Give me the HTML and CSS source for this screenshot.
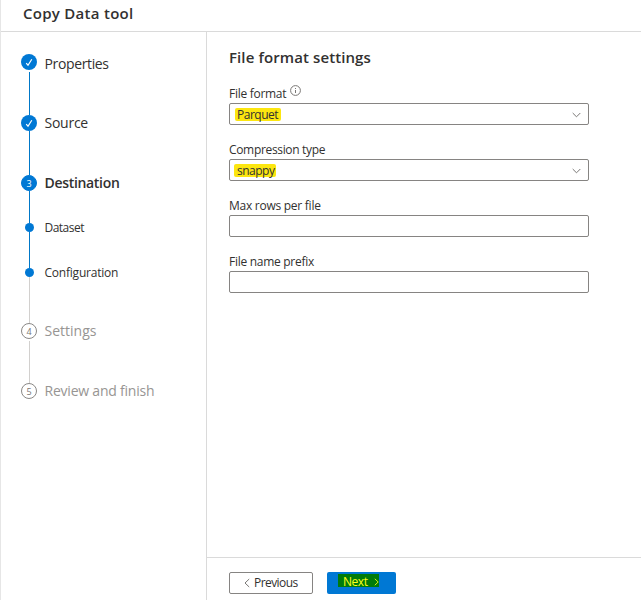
FILE: index.html
```html
<!DOCTYPE html>
<html lang="en">
<head>
<meta charset="utf-8">
<title>Copy Data tool</title>
<link rel="stylesheet" href="styles.css">
</head>
<body>
<div class="app">
  <header class="header"><h1><span class="t-title">Copy Data tool</span></h1></header>
  <div class="body">
    <nav class="steps">
      <div class="step s1"><div class="rail"><span class="dot done"><svg width="16" height="16" viewBox="0 0 16 16"><path d="M5.2 9.2 7 11.2 10.8 5.2"/></svg></span><i class="line gap"></i></div><span class="label t-properties">Properties</span></div>
      <div class="step s2"><div class="rail"><span class="dot done"><svg width="16" height="16" viewBox="0 0 16 16"><path d="M5.2 9.2 7 11.2 10.8 5.2"/></svg></span><i class="line"></i></div><span class="label t-source">Source</span></div>
      <div class="step s3"><div class="rail"><span class="dot current">3</span><i class="line"></i></div><span class="label strong t-destination">Destination</span></div>
      <div class="step sub s4"><div class="rail"><span class="small-dot"></span><i class="line"></i></div><span class="label t-dataset">Dataset</span></div>
      <div class="step sub s5"><div class="rail"><span class="small-dot"></span><i class="line pending"></i></div><span class="label medium t-configuration">Configuration</span></div>
      <div class="step muted s6"><div class="rail"><span class="dot">4</span><i class="line pending gap"></i></div><span class="label t-settings">Settings</span></div>
      <div class="step muted s7"><div class="rail"><span class="dot">5</span></div><span class="label t-review">Review and finish</span></div>
    </nav>
    <main class="main">
      <section class="content">
        <h2><span class="t-heading">File format settings</span></h2>
        <div class="field">
          <div class="field-label"><span class="t-format">File format</span><svg class="info" width="11" height="11" viewBox="0 0 11 11"><circle cx="5.5" cy="5.5" r="4.9"/><path d="M5.5 5V8M5.5 3V4"/></svg></div>
          <div class="box"><span class="value mark-parquet"><span class="t-parquet">Parquet</span></span><svg class="chevron" width="9" height="6" viewBox="0 0 9 6"><path d="M.7 1 4.5 4.8 8.3 1"/></svg></div>
        </div>
        <div class="field">
          <div class="field-label"><span class="t-compression">Compression type</span></div>
          <div class="box"><span class="value mark-snappy"><span class="t-snappy">snappy</span></span><svg class="chevron" width="9" height="6" viewBox="0 0 9 6"><path d="M.7 1 4.5 4.8 8.3 1"/></svg></div>
        </div>
        <div class="field">
          <div class="field-label"><span class="t-rows">Max rows per file</span></div>
          <div class="box"></div>
        </div>
        <div class="field">
          <div class="field-label"><span class="t-prefix">File name prefix</span></div>
          <div class="box"></div>
        </div>
      </section>
      <footer class="footer">
        <div class="btn previous"><svg width="6" height="10" viewBox="0 0 6 10"><path d="M5.2 1 1 5 5.2 9"/></svg><span class="t-previous">Previous</span></div>
        <div class="btn next"><span class="mark-next"><span class="t-next">Next</span><svg width="5" height="8" viewBox="0 0 5 8"><path d="M.8.8 4.2 4 .8 7.2"/></svg></span></div>
      </footer>
    </main>
  </div>
</div>
</body>
</html>
```
FILE: styles.css
```css
* { box-sizing: border-box; }
body { margin: 0; background: #fff; color: #323130; font: 12px/16px "Open Sans", "Noto Sans", sans-serif; }
.app { height: 600px; display: flex; flex-direction: column; border-left: 1px solid #e6e6e6; overflow: hidden; white-space: nowrap; }
.header { height: 32px; flex: none; border-bottom: 1px solid #dadada; padding: 3px 0 0 22px; }
h1, h2 { margin: 0; font-size: 15px; line-height: 20px; font-weight: 550; }
.body { flex: 1; display: flex; min-height: 0; }
.steps { width: 206px; flex: none; border-right: 1px solid #dadada; padding: 22px 0 0 20px; }
.step { display: flex; gap: 7.5px; }
.s1 { height: 61px; }
.s2 { height: 60px; }
.s3 { height: 48px; }
.s4 { height: 45px; }
.s5 { height: 55px; }
.s6 { height: 60px; }
.rail { width: 16px; display: flex; flex-direction: column; align-items: flex-start; }
.dot { width: 16px; height: 16px; flex: none; border: 1px solid #8a8886; border-radius: 50%; font-size: 9px; line-height: 15px; text-align: center; color: #797775; }
.done { border: 0; background: #0078d4; }
.done svg { display: block; }
.current { background: #0078d4; border-color: #0078d4; color: #fff; }
.small-dot { width: 9px; height: 9px; flex: none; margin-left: 4px; border-radius: 50%; background: #0078d4; }
.line { width: 1px; flex: 1; background: #0078c8; margin-left: 8px; }
.line.gap { margin-top: 2px; }
.line.pending { background: #d2d0ce; }
.label { font-size: 14px; line-height: 16px; margin-top: 2px; }
.s2 .label, .s3 .label, .s6 .label, .s7 .label { margin-top: 0; }
.sub .label { font-size: 12px; margin-top: -3px; }
.strong { font-weight: 550; }
.medium { font-weight: 500; }
.muted { color: #979593; }
.t-title { letter-spacing: .28px; }
.t-heading { letter-spacing: .1px; }
.t-properties { letter-spacing: -.36px; }
.t-source { letter-spacing: -.25px; }
.t-destination { letter-spacing: -.32px; }
.t-dataset { letter-spacing: -.52px; }
.t-configuration { letter-spacing: -.22px; }
.t-review { letter-spacing: -.22px; }
.t-format { letter-spacing: -.28px; }
.t-compression { letter-spacing: -.33px; }
.t-rows { letter-spacing: -.26px; }
.t-prefix { letter-spacing: -.28px; }
.t-parquet { letter-spacing: -.5px; }
.t-snappy { letter-spacing: -.5px; }
.t-previous { letter-spacing: -.56px; }
.t-next { letter-spacing: -.45px; }
.main { flex: 1; display: flex; flex-direction: column; }
.content { flex: 1; padding: 15px 0 0 22px; }
.content h2 { margin-bottom: 19px; }
.field { width: 360px; height: 56px; }
.field-label { height: 17px; display: flex; gap: 4px; font-weight: 500; }
.info { margin-top: -1px; }
.box { height: 22px; border: 1px solid #868482; border-radius: 2px; display: flex; align-items: center; justify-content: space-between; padding: 0 7px 0 5px; }
svg { flex: none; fill: none; stroke: #797775; stroke-width: 1; }
.chevron { margin-top: 2px; }
.done svg { stroke: #fff; stroke-width: 1.2; }
.value { height: 13px; line-height: 14px; margin-top: 1px; background: #fce610; }
.mark-parquet { width: 46px; padding-left: 2px; border-radius: 2px; }
.mark-snappy { width: 42px; padding-left: 3px; margin-left: -1px; border-radius: 2px; }
.footer { height: 43px; flex: none; border-top: 1px solid #dadada; padding: 14px 0 0 22px; display: flex; gap: 14px; }
.btn { height: 22px; display: flex; align-items: center; border-radius: 2px; }
.previous { width: 84px; border: 1px solid #868482; padding-left: 14px; gap: 4px; }
.next { width: 69px; background: #0078d4; padding-left: 11px; }
.mark-next { width: 41px; height: 13px; margin-top: -6px; background: #007b0a; color: #fcff1c; display: flex; align-items: center; gap: 6px; padding: 4px 0 0 5px; font-weight: 500; }
.mark-next svg { stroke: #d8f014; }
```
